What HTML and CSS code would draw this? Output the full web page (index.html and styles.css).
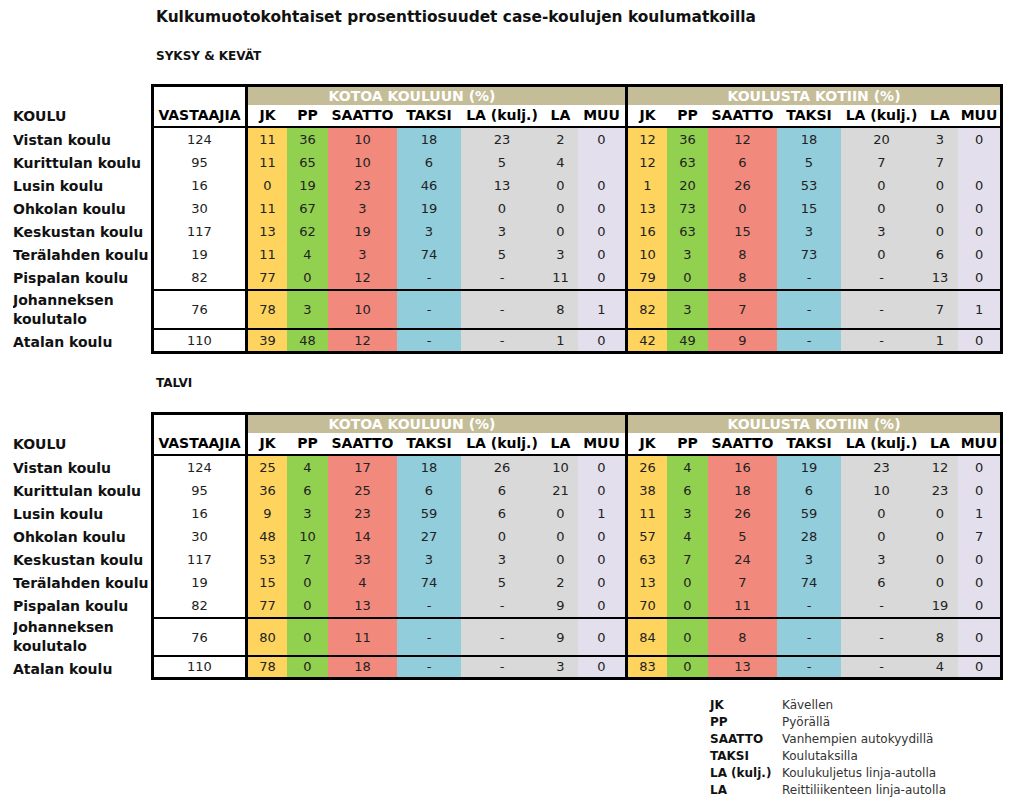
FILE: index.html
```html
<!DOCTYPE html>
<html lang="fi">
<head>
<meta charset="utf-8">
<title>Kulkumuotokohtaiset prosenttiosuudet</title>
<link rel="stylesheet" href="styles.css">
</head>
<body>
<div class="page">
  <h1 class="title">Kulkumuotokohtaiset prosenttiosuudet case-koulujen koulumatkoilla</h1>

  <h2 class="section">SYKSY &amp; KEVÄT</h2>
  <table class="grid">
    <colgroup>
      <col class="c-label"><col class="c-vast">
      <col class="c-jk"><col class="c-pp"><col class="c-saatto"><col class="c-taksi"><col class="c-lak"><col class="c-la"><col class="c-muu">
      <col class="c-jk"><col class="c-pp"><col class="c-saatto"><col class="c-taksi"><col class="c-lak2"><col class="c-la2"><col class="c-muu2">
    </colgroup>
    <thead>
      <tr class="r-group">
        <th class="label"></th>
        <th class="vast"></th>
        <th class="group group-left" colspan="7">KOTOA KOULUUN (%)</th>
        <th class="group" colspan="7">KOULUSTA KOTIIN (%)</th>
      </tr>
      <tr class="r-head">
        <th class="label">KOULU</th>
        <th class="vast">VASTAAJIA</th>
        <th>JK</th><th>PP</th><th>SAATTO</th><th>TAKSI</th><th>LA (kulj.)</th><th>LA</th><th class="end">MUU</th>
        <th>JK</th><th>PP</th><th>SAATTO</th><th>TAKSI</th><th>LA (kulj.)</th><th>LA</th><th class="end">MUU</th>
      </tr>
    </thead>
    <tbody>
      <tr><th class="label">Vistan koulu</th><td class="vast">124</td><td class="jk">11</td><td class="pp">36</td><td class="sa">10</td><td class="ta">18</td><td class="lk">23</td><td class="la">2</td><td class="mu end">0</td><td class="jk">12</td><td class="pp">36</td><td class="sa">12</td><td class="ta">18</td><td class="lk">20</td><td class="la">3</td><td class="mu end">0</td></tr>
      <tr><th class="label">Kurittulan koulu</th><td class="vast">95</td><td class="jk">11</td><td class="pp">65</td><td class="sa">10</td><td class="ta">6</td><td class="lk">5</td><td class="la">4</td><td class="mu end"></td><td class="jk">12</td><td class="pp">63</td><td class="sa">6</td><td class="ta">5</td><td class="lk">7</td><td class="la">7</td><td class="mu end"></td></tr>
      <tr><th class="label">Lusin koulu</th><td class="vast">16</td><td class="jk">0</td><td class="pp">19</td><td class="sa">23</td><td class="ta">46</td><td class="lk">13</td><td class="la">0</td><td class="mu end">0</td><td class="jk">1</td><td class="pp">20</td><td class="sa">26</td><td class="ta">53</td><td class="lk">0</td><td class="la">0</td><td class="mu end">0</td></tr>
      <tr><th class="label">Ohkolan koulu</th><td class="vast">30</td><td class="jk">11</td><td class="pp">67</td><td class="sa">3</td><td class="ta">19</td><td class="lk">0</td><td class="la">0</td><td class="mu end">0</td><td class="jk">13</td><td class="pp">73</td><td class="sa">0</td><td class="ta">15</td><td class="lk">0</td><td class="la">0</td><td class="mu end">0</td></tr>
      <tr><th class="label">Keskustan koulu</th><td class="vast">117</td><td class="jk">13</td><td class="pp">62</td><td class="sa">19</td><td class="ta">3</td><td class="lk">3</td><td class="la">0</td><td class="mu end">0</td><td class="jk">16</td><td class="pp">63</td><td class="sa">15</td><td class="ta">3</td><td class="lk">3</td><td class="la">0</td><td class="mu end">0</td></tr>
      <tr><th class="label">Terälahden koulu</th><td class="vast">19</td><td class="jk">11</td><td class="pp">4</td><td class="sa">3</td><td class="ta">74</td><td class="lk">5</td><td class="la">3</td><td class="mu end">0</td><td class="jk">10</td><td class="pp">3</td><td class="sa">8</td><td class="ta">73</td><td class="lk">0</td><td class="la">6</td><td class="mu end">0</td></tr>
      <tr><th class="label">Pispalan koulu</th><td class="vast">82</td><td class="jk">77</td><td class="pp">0</td><td class="sa">12</td><td class="ta">-</td><td class="lk">-</td><td class="la">11</td><td class="mu end">0</td><td class="jk">79</td><td class="pp">0</td><td class="sa">8</td><td class="ta">-</td><td class="lk">-</td><td class="la">13</td><td class="mu end">0</td></tr>
      <tr class="r-boxed"><th class="label two">Johanneksen<br>koulutalo</th><td class="vast">76</td><td class="jk">78</td><td class="pp">3</td><td class="sa">10</td><td class="ta">-</td><td class="lk">-</td><td class="la">8</td><td class="mu end">1</td><td class="jk">82</td><td class="pp">3</td><td class="sa">7</td><td class="ta">-</td><td class="lk">-</td><td class="la">7</td><td class="mu end">1</td></tr>
      <tr class="r-last"><th class="label">Atalan koulu</th><td class="vast">110</td><td class="jk">39</td><td class="pp">48</td><td class="sa">12</td><td class="ta">-</td><td class="lk">-</td><td class="la">1</td><td class="mu end">0</td><td class="jk">42</td><td class="pp">49</td><td class="sa">9</td><td class="ta">-</td><td class="lk">-</td><td class="la">1</td><td class="mu end">0</td></tr>
    </tbody>
  </table>

  <h2 class="section section-2">TALVI</h2>
  <table class="grid grid-2">
    <colgroup>
      <col class="c-label"><col class="c-vast">
      <col class="c-jk"><col class="c-pp"><col class="c-saatto"><col class="c-taksi"><col class="c-lak"><col class="c-la"><col class="c-muu">
      <col class="c-jk"><col class="c-pp"><col class="c-saatto"><col class="c-taksi"><col class="c-lak2"><col class="c-la2"><col class="c-muu2">
    </colgroup>
    <thead>
      <tr class="r-group">
        <th class="label"></th>
        <th class="vast"></th>
        <th class="group group-left" colspan="7">KOTOA KOULUUN (%)</th>
        <th class="group" colspan="7">KOULUSTA KOTIIN (%)</th>
      </tr>
      <tr class="r-head">
        <th class="label">KOULU</th>
        <th class="vast">VASTAAJIA</th>
        <th>JK</th><th>PP</th><th>SAATTO</th><th>TAKSI</th><th>LA (kulj.)</th><th>LA</th><th class="end">MUU</th>
        <th>JK</th><th>PP</th><th>SAATTO</th><th>TAKSI</th><th>LA (kulj.)</th><th>LA</th><th class="end">MUU</th>
      </tr>
    </thead>
    <tbody>
      <tr><th class="label">Vistan koulu</th><td class="vast">124</td><td class="jk">25</td><td class="pp">4</td><td class="sa">17</td><td class="ta">18</td><td class="lk">26</td><td class="la">10</td><td class="mu end">0</td><td class="jk">26</td><td class="pp">4</td><td class="sa">16</td><td class="ta">19</td><td class="lk">23</td><td class="la">12</td><td class="mu end">0</td></tr>
      <tr><th class="label">Kurittulan koulu</th><td class="vast">95</td><td class="jk">36</td><td class="pp">6</td><td class="sa">25</td><td class="ta">6</td><td class="lk">6</td><td class="la">21</td><td class="mu end">0</td><td class="jk">38</td><td class="pp">6</td><td class="sa">18</td><td class="ta">6</td><td class="lk">10</td><td class="la">23</td><td class="mu end">0</td></tr>
      <tr><th class="label">Lusin koulu</th><td class="vast">16</td><td class="jk">9</td><td class="pp">3</td><td class="sa">23</td><td class="ta">59</td><td class="lk">6</td><td class="la">0</td><td class="mu end">1</td><td class="jk">11</td><td class="pp">3</td><td class="sa">26</td><td class="ta">59</td><td class="lk">0</td><td class="la">0</td><td class="mu end">1</td></tr>
      <tr><th class="label">Ohkolan koulu</th><td class="vast">30</td><td class="jk">48</td><td class="pp">10</td><td class="sa">14</td><td class="ta">27</td><td class="lk">0</td><td class="la">0</td><td class="mu end">0</td><td class="jk">57</td><td class="pp">4</td><td class="sa">5</td><td class="ta">28</td><td class="lk">0</td><td class="la">0</td><td class="mu end">7</td></tr>
      <tr><th class="label">Keskustan koulu</th><td class="vast">117</td><td class="jk">53</td><td class="pp">7</td><td class="sa">33</td><td class="ta">3</td><td class="lk">3</td><td class="la">0</td><td class="mu end">0</td><td class="jk">63</td><td class="pp">7</td><td class="sa">24</td><td class="ta">3</td><td class="lk">3</td><td class="la">0</td><td class="mu end">0</td></tr>
      <tr><th class="label">Terälahden koulu</th><td class="vast">19</td><td class="jk">15</td><td class="pp">0</td><td class="sa">4</td><td class="ta">74</td><td class="lk">5</td><td class="la">2</td><td class="mu end">0</td><td class="jk">13</td><td class="pp">0</td><td class="sa">7</td><td class="ta">74</td><td class="lk">6</td><td class="la">0</td><td class="mu end">0</td></tr>
      <tr><th class="label">Pispalan koulu</th><td class="vast">82</td><td class="jk">77</td><td class="pp">0</td><td class="sa">13</td><td class="ta">-</td><td class="lk">-</td><td class="la">9</td><td class="mu end">0</td><td class="jk">70</td><td class="pp">0</td><td class="sa">11</td><td class="ta">-</td><td class="lk">-</td><td class="la">19</td><td class="mu end">0</td></tr>
      <tr class="r-boxed"><th class="label two">Johanneksen<br>koulutalo</th><td class="vast">76</td><td class="jk">80</td><td class="pp">0</td><td class="sa">11</td><td class="ta">-</td><td class="lk">-</td><td class="la">9</td><td class="mu end">0</td><td class="jk">84</td><td class="pp">0</td><td class="sa">8</td><td class="ta">-</td><td class="lk">-</td><td class="la">8</td><td class="mu end">0</td></tr>
      <tr class="r-last"><th class="label">Atalan koulu</th><td class="vast">110</td><td class="jk">78</td><td class="pp">0</td><td class="sa">18</td><td class="ta">-</td><td class="lk">-</td><td class="la">3</td><td class="mu end">0</td><td class="jk">83</td><td class="pp">0</td><td class="sa">13</td><td class="ta">-</td><td class="lk">-</td><td class="la">4</td><td class="mu end">0</td></tr>
    </tbody>
  </table>

  <dl class="legend">
    <dt>JK</dt><dd>Kävellen</dd>
    <dt>PP</dt><dd>Pyörällä</dd>
    <dt>SAATTO</dt><dd>Vanhempien autokyydillä</dd>
    <dt>TAKSI</dt><dd>Koulutaksilla</dd>
    <dt>LA (kulj.)</dt><dd>Koulukuljetus linja-autolla</dd>
    <dt>LA</dt><dd>Reittiliikenteen linja-autolla</dd>
  </dl>
</div>
</body>
</html>
```

FILE: styles.css
```css
html, body {
  margin: 0;
  padding: 0;
  background: #ffffff;
}

body {
  font-family: "DejaVu Sans", Verdana, sans-serif;
  color: #111111;
}

.page {
  padding: 8px 0 0 13px;
}

.title {
  margin: 0 0 0 143px;
  font-size: 15.4px;
  line-height: 18px;
  font-weight: bold;
  color: #111111;
}

.section {
  margin: 22px 0 20px 143px;
  font-size: 12px;
  line-height: 16px;
  font-weight: bold;
}

.section-2 {
  margin-top: 21px;
  margin-bottom: 21px;
}

.grid {
  table-layout: fixed;
  width: 990px;
  border-collapse: separate;
  border-spacing: 0;
  font-size: 13px;
}

.c-label { width: 138px; }
.c-vast { width: 97px; }
.c-jk { width: 39px; }
.c-pp { width: 41px; }
.c-saatto { width: 69px; }
.c-taksi { width: 64px; }
.c-lak { width: 82px; }
.c-la { width: 35px; }
.c-muu { width: 50px; }
.c-lak2 { width: 81px; }
.c-la2 { width: 36px; }
.c-muu2 { width: 45px; }

.grid th,
.grid td {
  padding: 0;
  text-align: center;
  vertical-align: middle;
  white-space: nowrap;
  overflow: hidden;
}

.grid td {
  color: #222222;
  line-height: 23px;
}

/* label column sits outside the framed table */
.grid .label {
  text-align: left;
  font-size: 14px;
  font-weight: bold;
  color: #111111;
  border: none;
  background: #ffffff;
}

.grid .label.two {
  line-height: 19px;
  white-space: normal;
}

/* group header row */
.r-group th {
  line-height: 18px;
  border-top: 3px solid #000000;
}

.r-group th.label {
  border-top: none;
}

.r-group .group {
  background: #c4bd97;
  color: #ffffff;
  font-size: 14px;
  font-weight: bold;
  border-right: 3px solid #000000;
}

.r-group .group-left {
  padding-right: 49px;
}

/* column header row */
.r-head th {
  font-size: 14px;
  font-weight: bold;
  line-height: 21px;
  border-bottom: 2px solid #000000;
  color: #000000;
}

.r-head th.label {
  border-bottom: none;
}

.grid .vast {
  border-left: 3px solid #000000;
  border-right: 3px solid #000000;
  background: #ffffff;
}

.grid .end {
  border-right: 3px solid #000000;
}

/* data colours */
.jk { background: #fed45e; }
.pp { background: #92d050; }
.sa { background: #f2897d; }
.ta { background: #92cddc; }
.lk { background: #d9d9d9; }
.la { background: #d9d9d9; }
.mu { background: #e4dfec; }

.r-boxed td {
  height: 37px;
  border-top: 2px solid #000000;
  border-bottom: 2px solid #000000;
}

.grid-2 .r-boxed td {
  height: 36px;
}

.r-last td {
  line-height: 21px;
  border-bottom: 3px solid #000000;
}

.grid-2 .r-last td {
  line-height: 20px;
}

/* legend */
.legend {
  display: grid;
  grid-template-columns: 72px auto;
  margin: 17px 0 0 697px;
  font-size: 12px;
  line-height: 17px;
}

.legend dt {
  font-weight: bold;
  color: #111111;
}

.legend dd {
  margin: 0;
  color: #333333;
}
```
